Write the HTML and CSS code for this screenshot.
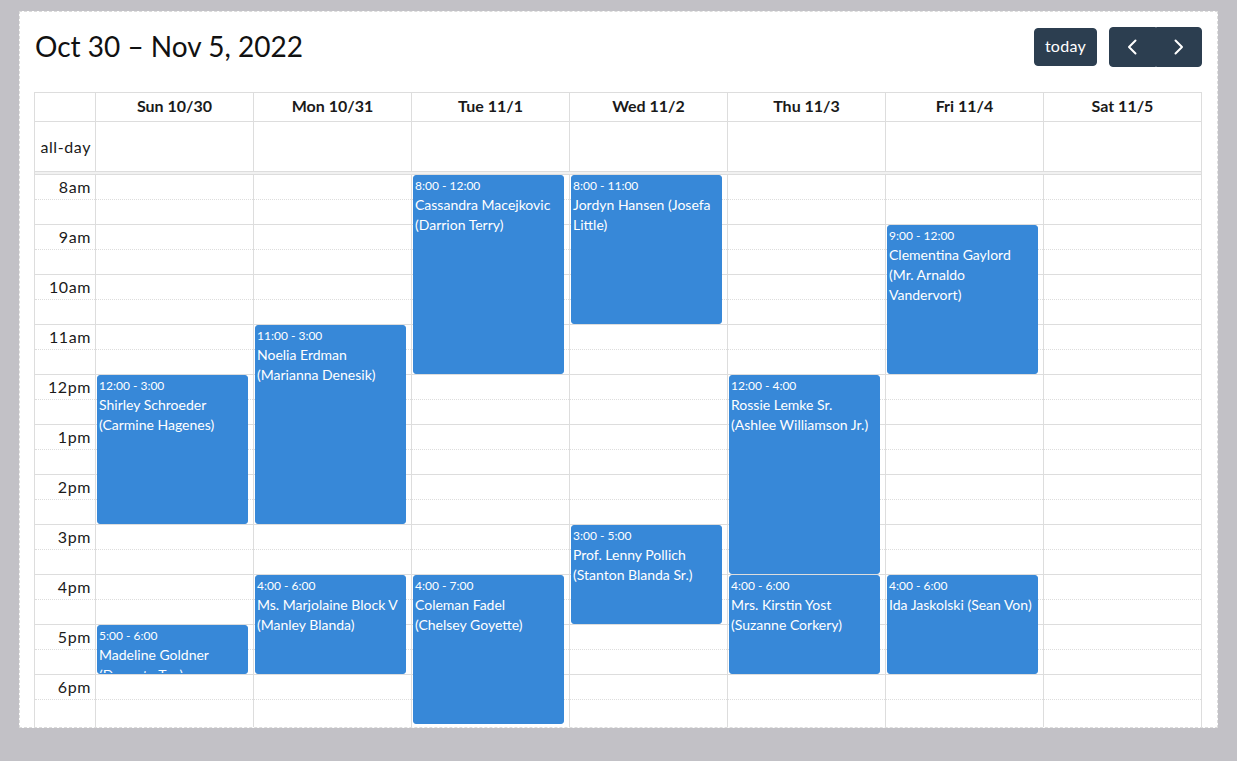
FILE: index.html
```html
<!DOCTYPE html>
<html lang="en">
<head>
<meta charset="utf-8">
<title>Calendar</title>
<link rel="stylesheet" href="styles.css">
</head>
<body>
<div class="card">
  <div class="toolbar">
    <h2 class="title">Oct 30 – Nov 5, 2022</h2>
    <div class="actions">
      <button class="btn btn-today" type="button">today</button>
      <div class="btn-group">
        <button class="btn btn-nav" type="button" aria-label="prev">
          <svg width="24" height="24" viewBox="0 0 24 24"><polyline points="15.5,5.5 9,12 15.5,18.5" fill="none" stroke="#fff" stroke-width="2" stroke-linecap="round" stroke-linejoin="round"/></svg>
        </button>
        <button class="btn btn-nav" type="button" aria-label="next">
          <svg width="24" height="24" viewBox="0 0 24 24"><polyline points="8.5,5.5 15,12 8.5,18.5" fill="none" stroke="#fff" stroke-width="2" stroke-linecap="round" stroke-linejoin="round"/></svg>
        </button>
      </div>
    </div>
  </div>

  <div class="cal">
    <div class="row head">
      <div class="axis"></div>
      <div class="day">Sun 10/30</div>
      <div class="day">Mon 10/31</div>
      <div class="day">Tue 11/1</div>
      <div class="day">Wed 11/2</div>
      <div class="day">Thu 11/3</div>
      <div class="day">Fri 11/4</div>
      <div class="day">Sat 11/5</div>
    </div>
    <div class="row allday">
      <div class="axis">all-day</div>
      <div></div><div></div><div></div><div></div><div></div><div></div><div></div>
    </div>
    <div class="divider"></div>

    <div class="body">
      <div class="slots">
        <div class="slot"><span class="label">8am</span></div>
        <div class="slot minor"></div>
        <div class="slot"><span class="label">9am</span></div>
        <div class="slot minor"></div>
        <div class="slot"><span class="label">10am</span></div>
        <div class="slot minor"></div>
        <div class="slot"><span class="label">11am</span></div>
        <div class="slot minor"></div>
        <div class="slot"><span class="label">12pm</span></div>
        <div class="slot minor"></div>
        <div class="slot"><span class="label">1pm</span></div>
        <div class="slot minor"></div>
        <div class="slot"><span class="label">2pm</span></div>
        <div class="slot minor"></div>
        <div class="slot"><span class="label">3pm</span></div>
        <div class="slot minor"></div>
        <div class="slot"><span class="label">4pm</span></div>
        <div class="slot minor"></div>
        <div class="slot"><span class="label">5pm</span></div>
        <div class="slot minor"></div>
        <div class="slot"><span class="label">6pm</span></div>
        <div class="slot minor"></div>
      </div>

      <div class="cols">
        <div class="axis-col"></div>
        <div class="col">
          <div class="event" style="top:201px;height:149px"><div class="time">12:00 - 3:00</div><div class="name">Shirley Schroeder (Carmine Hagenes)</div></div>
          <div class="event" style="top:451px;height:49px"><div class="time">5:00 - 6:00</div><div class="name">Madeline Goldner (Davonte Toy)</div></div>
        </div>
        <div class="col">
          <div class="event" style="top:151px;height:199px"><div class="time">11:00 - 3:00</div><div class="name">Noelia Erdman (Marianna Denesik)</div></div>
          <div class="event" style="top:401px;height:99px"><div class="time">4:00 - 6:00</div><div class="name">Ms. Marjolaine Block V (Manley Blanda)</div></div>
        </div>
        <div class="col">
          <div class="event" style="top:1px;height:199px"><div class="time">8:00 - 12:00</div><div class="name">Cassandra Macejkovic (Darrion Terry)</div></div>
          <div class="event" style="top:401px;height:149px"><div class="time">4:00 - 7:00</div><div class="name">Coleman Fadel<br>(Chelsey Goyette)</div></div>
        </div>
        <div class="col">
          <div class="event" style="top:1px;height:149px"><div class="time">8:00 - 11:00</div><div class="name">Jordyn Hansen (Josefa Little)</div></div>
          <div class="event" style="top:351px;height:99px"><div class="time">3:00 - 5:00</div><div class="name">Prof. Lenny Pollich (Stanton Blanda Sr.)</div></div>
        </div>
        <div class="col">
          <div class="event" style="top:201px;height:199px"><div class="time">12:00 - 4:00</div><div class="name">Rossie Lemke Sr. (Ashlee Williamson Jr.)</div></div>
          <div class="event" style="top:401px;height:99px"><div class="time">4:00 - 6:00</div><div class="name">Mrs. Kirstin Yost (Suzanne Corkery)</div></div>
        </div>
        <div class="col">
          <div class="event" style="top:51px;height:149px"><div class="time">9:00 - 12:00</div><div class="name">Clementina Gaylord (Mr. Arnaldo Vandervort)</div></div>
          <div class="event" style="top:401px;height:99px"><div class="time">4:00 - 6:00</div><div class="name">Ida Jaskolski (Sean Von)</div></div>
        </div>
        <div class="col"></div>
      </div>
    </div>
  </div>
</div>
</body>
</html>
```

FILE: styles.css
```css
* {
  box-sizing: border-box;
}

html,
body {
  margin: 0;
}

body {
  background: #c2c1c6;
  padding: 11px 19px 0;
  font-family: Lato, "Noto Sans", sans-serif;
  font-size: 16px;
  color: #212529;
}

.card {
  background: #fff;
  border: 1px dashed #dcdcdc;
  height: 717px;
  overflow: hidden;
  padding: 15px 15px 0 14px;
}

.toolbar {
  display: flex;
  justify-content: space-between;
  align-items: center;
  height: 40px;
  margin-bottom: 25px;
}

.title {
  margin: 0 0 3px 1px;
  font-size: 28px;
  font-weight: 400;
  line-height: 1;
  color: #111;
}

.actions {
  display: flex;
  align-items: center;
  gap: 12px;
}

.btn {
  background: #2c3e50;
  border: 1px solid #2c3e50;
  color: #fff;
  font-family: inherit;
  font-size: 16px;
  border-radius: 4px;
  display: flex;
  align-items: center;
  justify-content: center;
  cursor: pointer;
}

.btn-today {
  height: 38px;
  width: 63px;
  padding: 0 0 3px;
  letter-spacing: 0.3px;
}

.btn-group {
  display: flex;
}

.btn-nav {
  height: 40px;
  width: 46.5px;
  padding: 0;
}

.btn-group .btn-nav:first-child {
  border-radius: 4px 0 0 4px;
}

.btn-group .btn-nav:last-child {
  border-radius: 0 4px 4px 0;
}

.cal {
  border: 1px solid #ddd;
  border-bottom: none;
}

.row {
  display: grid;
  grid-template-columns: 60px repeat(7, 1fr);
  border-bottom: 1px solid #ddd;
}

.row > div + div {
  border-left: 1px solid #ddd;
}

.head .day {
  text-align: center;
  font-weight: 700;
  padding: 1px 4px 3px;
  line-height: 24px;
  color: #1a1a1a;
}

.allday {
  height: 50px;
}

.allday .axis {
  display: flex;
  align-items: center;
  justify-content: flex-end;
  padding: 0 4px;
  color: #1a1a1a;
  letter-spacing: 0.6px;
}

.divider {
  height: 2px;
  background: #f1f1f1;
}

.body {
  display: grid;
  height: 580px;
}

.slots,
.cols {
  grid-area: 1 / 1;
}

.slot {
  height: 25px;
  border-top: 1px solid #ddd;
}

.slot.minor {
  border-top-style: dotted;
}

.label {
  display: block;
  width: 60px;
  text-align: right;
  padding: 0 4px;
  line-height: 23px;
  color: #1a1a1a;
  letter-spacing: 0.6px;
}

.cols {
  display: grid;
  grid-template-columns: 60px repeat(7, 1fr);
}

.col {
  border-left: 1px solid #ddd;
  position: relative;
}

.event {
  position: absolute;
  left: 1px;
  right: 5px;
  background: #3788d8;
  border: 1px solid #3788d8;
  border-radius: 3px;
  color: #fff;
  overflow: hidden;
  padding: 1px 1px 0;
  font-size: 14px;
}

.event .time {
  font-size: 12px;
  line-height: 17px;
  margin-bottom: 1px;
  white-space: nowrap;
}

.event .name {
  line-height: 20px;
}
```
